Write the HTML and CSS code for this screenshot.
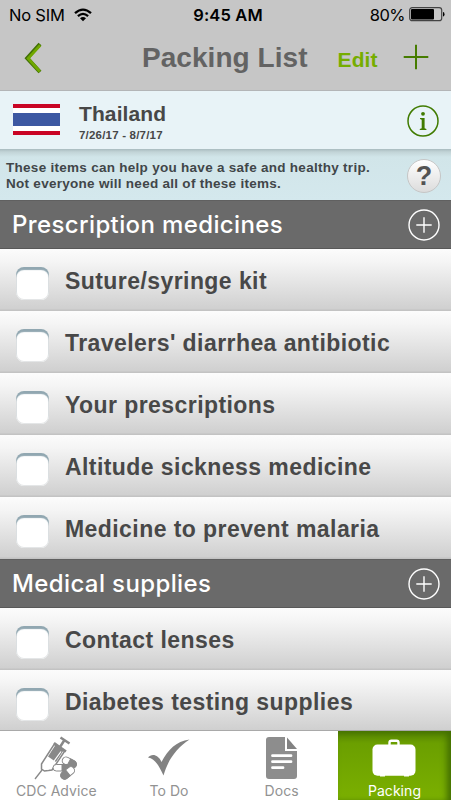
FILE: index.html
```html
<!DOCTYPE html>
<html lang="en">
<head>
<meta charset="utf-8">
<title>Packing List</title>
<link rel="stylesheet" href="styles.css">
</head>
<body>
<div class="app">
  <header class="top">
    <div class="status">
      <div class="carrier"><span>No SIM</span>
        <svg width="18" height="14" viewBox="0 0 18 14"><g fill="none" stroke="#000" stroke-width="2.3"><path d="M1 5.2Q9-2 17 5.2"/><path d="M3.9 8.1Q9 3.6 14.1 8.1"/></g><path d="M6 10.2Q9 7.6 12 10.2L9 13.2Z"/></svg>
      </div>
      <div class="clock">9:45 AM</div>
      <div class="power"><span>80%</span>
        <svg width="36" height="15" viewBox="0 0 36 15"><rect x=".7" y=".7" width="32" height="13" rx="2.5" fill="none" stroke="#444" stroke-width="1.2"/><rect x="2" y="2" width="23" height="10.5" rx="1"/><path d="M34 5q1.5 0 1.5 2.3T34 9.6Z"/></svg>
      </div>
    </div>
    <nav class="nav">
      <svg class="back" width="20" height="34" viewBox="0 0 20 34"><path d="M16 3L3.2 17.2L16 31" fill="none" stroke="#416f05" stroke-width="4"/><path d="M16.2 4.3L4.2 17.4L15.8 30.5" fill="none" stroke="#70a800" stroke-width="2.8"/></svg>
      <h1>Packing List</h1>
      <span class="edit">Edit</span>
      <svg class="add" width="26" height="26" viewBox="0 0 26 26"><path d="M13 .7V25.3M.7 13H25.3" stroke="#467c00" stroke-width="2"/></svg>
    </nav>
  </header>
  <section class="trip">
    <div class="flag"></div>
    <div class="place"><h2>Thailand</h2><p>7/26/17 - 8/7/17</p></div>
    <svg class="info" width="32" height="32" viewBox="0 0 32 32"><circle cx="16" cy="16" r="15" fill="none" stroke="#407b00" stroke-width="1.5"/><circle cx="16" cy="8.8" r="1.9" fill="#407b00"/><path d="M13 13H17.6V23.3L19.4 24V25H12.8V24L14.7 23.3V14.7L13 14Z" fill="#407b00"/></svg>
  </section>
  <section class="note">
    <p>These items can help you have a safe and healthy trip.<br>Not everyone will need all of these items.</p>
    <div class="help">?</div>
  </section>
  <main>
    <h3><span>Prescription medicines</span><svg width="32" height="32" viewBox="0 0 32 32"><g fill="none" stroke="#fff" stroke-width="1.4"><circle cx="16" cy="16" r="15"/><path d="M16 8.3V23.7M8.3 16H23.7"/></g></svg></h3>
    <ul>
      <li><i class="box"></i><span>Suture/syringe kit</span></li>
      <li><i class="box"></i><span>Travelers' diarrhea antibiotic</span></li>
      <li><i class="box"></i><span>Your prescriptions</span></li>
      <li><i class="box"></i><span>Altitude sickness medicine</span></li>
      <li><i class="box"></i><span>Medicine to prevent malaria</span></li>
    </ul>
    <h3><span>Medical supplies</span><svg width="32" height="32" viewBox="0 0 32 32"><g fill="none" stroke="#fff" stroke-width="1.4"><circle cx="16" cy="16" r="15"/><path d="M16 8.3V23.7M8.3 16H23.7"/></g></svg></h3>
    <ul>
      <li><i class="box"></i><span>Contact lenses</span></li>
      <li><i class="box"></i><span>Diabetes testing supplies</span></li>
    </ul>
  </main>
  <footer class="tabs">
    <div class="tab">
      <svg width="46" height="46" viewBox="0 0 46 46"><path d="M2 43L9 34" stroke="#888" stroke-width="1.3"/><path d="M8.5 28L21 8.5L31.5 15.5L19 34L11.5 35L8.5 33Z" fill="#fff" stroke="#888" stroke-width="1.5"/><path d="M15 20.5L22.5 9L30.5 14.5L23 26Z" fill="#888"/><path d="M14 23L10.8 28.5V31M28 15.5L14.5 34" stroke="#fff" stroke-width="1.2" fill="none"/><path d="M21 7L33 15.5M27 11L31.5 4M27.5 1.5L36.5 7.5" stroke="#888" stroke-width="2.5"/><g stroke="#888" stroke-width="1"><g transform="rotate(28 36 26)"><rect x="29" y="22.5" width="15" height="7.5" rx="3.75" fill="#fff"/><path d="M36 22.5h4.2a3.75 3.75 0 0 1 0 7.5H36z" fill="#888"/></g><rect x="20" y="28.5" width="17" height="6.5" rx="3.25" fill="#fff"/><path d="M29 28.5h4.7a3.25 3.25 0 0 1 0 6.5H29z" fill="#888"/><g transform="rotate(-38 35 37)"><rect x="27" y="33" width="15.5" height="7.5" rx="3.75" fill="#fff"/><path d="M35 33h-4.2a3.75 3.75 0 0 0 0 7.5H35z" fill="#888"/></g></g></svg>
      <span>CDC Advice</span>
    </div>
    <div class="tab">
      <svg width="42" height="46" viewBox="0 0 42 46"><path d="M0 21.5C3 17.5 10 17.5 13.5 26C20 13.5 28 5.5 41.5 3.5C28 12.5 20 24 15.5 39.5C12 32 8 23 0 21.5Z" fill="#828282"/></svg>
      <span>To Do</span>
    </div>
    <div class="tab">
      <svg width="34" height="46" viewBox="0 0 34 46"><path d="M4 1H20V15H32V40Q32 43 29 43H4Q1 43 1 40V4Q1 1 4 1Z" fill="#8d8d8d"/><path d="M22 1.5V13H32Z" fill="#828282"/><path d="M7.5 19.7H26M7.5 25.7H26M7.5 31.7H18" stroke="#fff" stroke-width="2.8" stroke-linecap="round"/></svg>
      <span>Docs</span>
    </div>
    <div class="tab active">
      <svg width="44" height="46" viewBox="0 0 44 46"><path d="M17.5 10V6.5Q17.5 4.7 19.3 4.7H24.7Q26.5 4.7 26.5 6.5V10" fill="none" stroke="#fff" stroke-width="2.4"/><rect x=".5" y="8.5" width="43" height="31.3" rx="5" fill="#fff"/><path d="M8 39h5v1.5H8zM32 39h5v1.5h-5z" fill="#fff"/></svg>
      <span>Packing</span>
    </div>
  </footer>
</div>
</body>
</html>
```
FILE: styles.css
```css
* { box-sizing: border-box; margin: 0; padding: 0; }
body { width: 451px; height: 800px; overflow: hidden; background: #fff; font-family: "Liberation Sans", sans-serif; }
svg { display: block; flex: none; }
.app { height: 800px; display: flex; flex-direction: column; white-space: nowrap; }
.top { height: 91px; flex: none; background: #c6c6c6; border-bottom: 1px solid #b3b5b7; }
.status { height: 29px; display: grid; grid-template-columns: 1fr auto 1fr; align-items: center; font: 16.5px Inter, sans-serif; color: #000; }
.carrier { display: flex; gap: 9px; padding: 0 0 0 9px; align-items: center; letter-spacing: -.2px; }
.clock { font-weight: 600; letter-spacing: .15px; padding-left: 5px; }
.power { display: flex; justify-content: flex-end; gap: 4px; padding-right: 6px; align-items: center; letter-spacing: -.5px; }
.nav { height: 61px; display: flex; align-items: center; padding: 0 22px 0 24px; }
.nav h1 { font-size: 28px; line-height: 32px; color: #636363; margin: -3px 0 0 98px; letter-spacing: .05px; }
.edit { font-size: 21px; font-weight: bold; line-height: 24px; color: #75ad00; margin: 0 0 0 30px; letter-spacing: .1px; }
.add { margin: -5px 0 0 auto; }
.back { margin-top: -3px; }
.trip { height: 58px; flex: none; display: flex; align-items: center; padding: 0 12px 0 13px; background: #e8f3f7; }
.flag { width: 47px; height: 31px; margin-top: -1px; background: linear-gradient(#c90424 0 4px, #fff 4px 9px, #3d58a2 9px 22px, #fff 22px 27px, #c90424 27px); }
.place { margin: 5px auto 0 19px; color: #474747; }
.place h2 { font-size: 21px; line-height: 24px; letter-spacing: .1px; }
.place p { font-size: 11.5px; font-weight: bold; line-height: 16px; letter-spacing: .2px; margin-top: 1px; }
.info { margin-top: 2px; }
.note { height: 51px; flex: none; display: flex; align-items: center; justify-content: space-between; padding: 2px 10px 0 6px; background: linear-gradient(#a9bbbf 0, #c2d4d7 3px, #d1e5e9 8px, #d4e8ed); }
.note p { font-size: 13.5px; font-weight: bold; line-height: 15.5px; color: #414649; letter-spacing: .28px; }
.help { width: 34px; height: 34px; border-radius: 50%; border: 1px solid #c6c6c6; background: linear-gradient(#fff, #dcdcdc); font-size: 27px; font-weight: bold; line-height: 32px; text-align: center; color: #535353; }
main { flex: 1; min-height: 0; overflow: hidden; }
h3 { height: 49px; display: flex; align-items: center; justify-content: space-between; padding: 0 11px 0 12px; background: #6a6a6a; border-bottom: 1px solid #585858; border-top: 1px solid #606060; color: #fff; font: 500 24px Inter, sans-serif; letter-spacing: .38px; }
ul { list-style: none; }
li { height: 62px; display: flex; align-items: center; padding: 2px 0 0 16px; background: linear-gradient(#fcfcfc, #f5f5f5 20%, #d0d0d0 96%, #c3c3c3 99%); }
li span { font-size: 23px; font-weight: bold; line-height: 26px; color: #484848; margin: 0 0 0 16px; letter-spacing: .43px; }
.box { width: 33px; height: 33px; margin-top: 4px; border-radius: 8px; background: #fff; box-shadow: inset 0 3px 1px #91a7b1, inset 0 0 0 1px #e4e6e7; }
.tabs { height: 70px; flex: none; display: grid; grid-template-columns: repeat(3, 1fr) 113px; border-top: 1px solid #a9a9a9; background: #fff; }
.tab { display: flex; flex-direction: column; align-items: center; padding-top: 5px; color: #929292; font: 14px Inter, sans-serif; }
.tab span { line-height: 17px; letter-spacing: .05px; }
.active { color: #fff; background: linear-gradient(#568500, #6b9f00 18%, #7bb000); box-shadow: inset -4px 2px 6px #426e00; }
```
